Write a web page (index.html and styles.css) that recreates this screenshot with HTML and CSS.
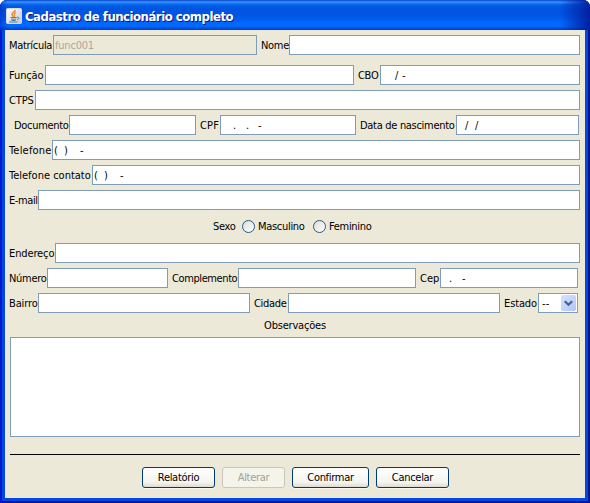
FILE: index.html
```html
<!DOCTYPE html>
<html lang="pt-BR">
<head>
<meta charset="utf-8">
<title>Cadastro de funcionário completo</title>
<link rel="stylesheet" href="styles.css">
</head>
<body>
<main class="window">
  <header class="titlebar">
    <svg class="logo" width="16" height="16" viewBox="0 0 16 16">
      <defs><linearGradient id="lg" x2="1" y2="1"><stop stop-color="#fff"/><stop offset="1" stop-color="#c4cad0"/></linearGradient></defs>
      <rect x=".5" y=".5" width="15" height="15" rx="1" fill="url(#lg)" stroke="#d9dadd"/>
      <path d="M9.500 2C9 4 5.500 4.500 6 6.500C6.200 7.400 7 8 7.500 8.800M10 4.500C8.500 5.300 7.800 6 8.500 7C8.900 7.700 8.500 8.300 8 8.800" fill="none" stroke="#ef8a30" stroke-width="1.400"/>
      <path d="M4.500 9.500H10.500M5 11.200H10M5.500 12.500H9.500M3 14H11.500M10.500 9.500C13.500 8.500 13.500 11 11 11.700" fill="none" stroke="#557f9f"/>
    </svg>
    <h1 class="title">Cadastro de funcionário completo</h1>
  </header>
  <form class="content">
    <div class="row row-id"><label>Matrícula</label><div class="field disabled">func001</div><label class="next">Nome</label><div class="field"></div></div>
    <div class="row row-role"><label class="loose">Função</label><div class="field"></div><label class="next">CBO</label><div class="field"><span class="cbo-slash">/</span><span class="cbo-dash">-</span></div></div>
    <div class="row row-ctps"><label class="loose">CTPS</label><div class="field"></div></div>
    <div class="row row-doc"><label>Documento</label><div class="field"></div><label class="next wide">CPF</label><div class="field"><span class="cpf-a">.</span><span class="cpf-b">.</span><span class="cpf-c">-</span></div><label class="next birth">Data de nascimento</label><div class="field"><span class="date-a">/</span><span class="date-b">/</span></div></div>
    <div class="row row-tel"><label class="wide">Telefone</label><div class="field"><span class="tel-a">(</span><span class="tel-b">)</span><span class="tel-c">-</span></div></div>
    <div class="row row-contact"><label class="even">Telefone contato</label><div class="field"><span class="tel-a">(</span><span class="tel-b">)</span><span class="tel-c">-</span></div></div>
    <div class="row row-mail"><label class="tight">E-mail</label><div class="field"></div></div>
    <div class="sex"><label class="sex-label">Sexo</label><i class="radio"></i><label class="male">Masculino</label><i class="radio"></i><label>Feminino</label></div>
    <div class="row row-address"><label class="loose">Endereço</label><div class="field"></div></div>
    <div class="row row-number"><label>Número</label><div class="field"></div><label class="next tight">Complemento</label><div class="field"></div><label class="next even">Cep</label><div class="field"><span class="cep-a">.</span><span class="cep-b">-</span></div></div>
    <div class="row row-city"><label class="loose">Bairro</label><div class="field"></div><label class="next">Cidade</label><div class="field"></div><label class="next loose">Estado</label>
      <div class="field combo"><span>--</span><i class="arrow"><svg width="9" height="7" viewBox="0 0 9 7"><path d="M.8 1.200L4.500 4.800L8.200 1.200" fill="none" stroke="#4d6185" stroke-width="2.200"/></svg></i></div></div>
    <label class="notes-label">Observações</label>
    <div class="notes"></div>
    <hr class="rule">
    <div class="buttons"><button type="button" class="report">Relatório</button><button type="button" class="edit" disabled>Alterar</button><button type="button" class="confirm">Confirmar</button><button type="button" class="cancel">Cancelar</button></div>
  </form>
</main>
</body>
</html>
```
FILE: styles.css
```css
* { box-sizing: border-box; }
body { margin: 0; background: #fff; font: 11px/14px "DejaVu Sans Condensed", "DejaVu Sans", sans-serif; color: #000; letter-spacing: -.3px; }
.window { width: 590px; height: 503px; padding: 0 5px 5px; border-radius: 7px 7px 0 0; overflow: hidden; background: #0048e0;
  box-shadow: inset 2px 0 #0019cf, inset -2px 0 #001590, inset 0 -2px #001590; }
.titlebar { height: 30px; margin: 0 -5px; padding: 2px 6px 0; display: flex; align-items: center; gap: 3px;
  background: linear-gradient(90deg, #0024b880 0, #0024b800 8px calc(100% - 30px), #0020a0 100%), linear-gradient(#0842c8 0, #3a94ff 2px, #2080f8 3px, #0060e8 5px, #0054e0 9px, #0055e6 16px, #0066fc 22px, #006aff 26px, #0048d8 29px, #0038c0 30px); }
.title { margin: 1px 0 0; color: #fff; font: bold 13px/16px "DejaVu Sans Condensed", sans-serif; letter-spacing: -.48px; text-shadow: 1px 1px #0a1883; }
.content { height: 468px; background: #ece9d8; padding: 5px 5px 0 4px; display: flex; flex-direction: column; }
.row { display: grid; height: 20px; flex: none; margin-bottom: 5px; align-items: center; white-space: nowrap; }
.row label { margin-top: 2px; }
.row-id { grid-template-columns: 44px 204px 32px 291px; margin-bottom: 10px; }
.row-role { grid-template-columns: 36px 309px 26px 200px; }
.row-ctps { grid-template-columns: 26px 545px; }
.row-doc { grid-template-columns: 55px 127px 24px 136px 100px 123px; margin-left: 5px; }
.row-tel { grid-template-columns: 43px 528px; }
.row-contact { grid-template-columns: 83px 488px; }
.row-mail { grid-template-columns: 29px 542px; }
.row-address { grid-template-columns: 46px 525px; }
.row-number { grid-template-columns: 38px 121px 70px 178px 24px 138px; }
.row-city { grid-template-columns: 29px 212px 38px 212px 38px 40px; }
.next { padding-left: 4px; }
.tight { letter-spacing: -.4px; }
.loose { letter-spacing: -.12px; }
.even { letter-spacing: 0; }
.wide { letter-spacing: .2px; }
.field { height: 20px; border: 1px solid #7f9db9; background: #fff; padding: 3px 1px 0; display: flex; }
.field.disabled { background: #ece9d8; color: #aca899; letter-spacing: -.2px; }
.cbo-slash { margin-left: 13px; width: 7px; }
.cpf-a { margin-left: 11px; width: 13px; }
.cpf-b { width: 12px; }
.date-a { margin-left: 7px; width: 10px; }
.tel-a { width: 10px; }
.tel-b { width: 16px; }
.cep-a { margin-left: 7px; width: 13px; }
.sex { height: 23px; flex: none; margin: 0 0 5px 204px; display: flex; align-items: center; }
.sex-label { width: 29px; }
.radio { width: 13px; height: 13px; border: 1px solid #285a83; border-radius: 50%; background: linear-gradient(135deg, #dcdcd7, #fff); margin-right: 3px; }
.male { width: 55px; }
.notes-label { height: 19px; align-self: center; margin: 0 0 0 1px; padding-top: 1px; letter-spacing: -.2px; }
.notes { height: 100px; margin-left: 1px; border: 1px solid #7f9db9; background: #fff; }
.rule { width: 570px; height: 1px; margin: 17px 0 12px 1px; border: 0; background: #000; }
.buttons { display: flex; gap: 7px; margin-left: 133px; }
button { height: 21px; padding: 0; border: 1px solid #003c74; border-radius: 3px; background: linear-gradient(#fff, #f5f4ee 75%, #dedbd1); font: inherit; letter-spacing: inherit; color: #000; box-shadow: 0 1px #f7f5ed; }
button:disabled { background: #f5f4ea; border-color: #c9c7ba; color: #a1a192; box-shadow: none; }
.report, .cancel { width: 73px; }
.edit { width: 63px; }
.confirm { width: 77px; }
.combo { padding: 1px; justify-content: space-between; }
.combo span { padding: 2px 0 0 2px; letter-spacing: .2px; }
.arrow { width: 15px; height: 16px; border-radius: 2px; background: linear-gradient(135deg, #d6e2ff, #b0c5f8); display: grid; place-items: center; }
```
